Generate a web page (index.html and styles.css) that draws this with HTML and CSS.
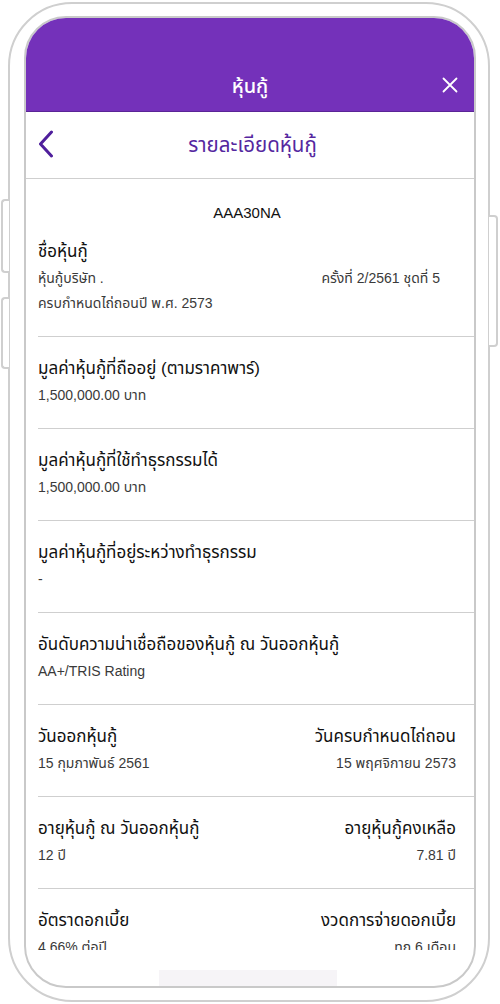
FILE: index.html
```html
<!DOCTYPE html>
<html>
<head>
	<meta charset="utf-8">
	<link rel="stylesheet" href="styles.css">
</head>
<body>
<div class="phone">
	<div class="side-btn btn-left-1"></div>
	<div class="side-btn btn-left-2"></div>
	<div class="side-btn btn-right"></div>

	<div class="screen">
		<div class="topbar">
			<div class="topbar-title">หุ้นกู้</div>
			<svg class="close" width="16" height="16" viewBox="0 0 16 16">
				<path d="M1.5 1.5 L14.5 14.5 M14.5 1.5 L1.5 14.5" stroke="#fff" stroke-width="1.8" fill="none" stroke-linecap="round"/>
			</svg>
		</div>
		<div class="subbar">
			<svg class="back" width="16" height="28" viewBox="0 0 16 28">
				<path d="M13.5 2 L2.5 14 L13.5 26" stroke="#4f1f9c" stroke-width="3" fill="none" stroke-linecap="round" stroke-linejoin="round"/>
			</svg>
			<div class="subbar-title">รายละเอียดหุ้นกู้</div>
		</div>

		<div class="content">
			<div class="block first">
				<div class="code">AAA30NA</div>
				<div class="label">ชื่อหุ้นกู้</div>
				<div class="pair">
					<div class="val">หุ้นกู้บริษัท .</div>
					<div class="val right-in">ครั้งที่ 2/2561 ชุดที่ 5</div>
				</div>
				<div class="val">ครบกำหนดไถ่ถอนปี พ.ศ. 2573</div>
			</div>

			<div class="block">
				<div class="label">มูลค่าหุ้นกู้ที่ถืออยู่ (ตามราคาพาร์)</div>
				<div class="val">1,500,000.00 บาท</div>
			</div>

			<div class="block">
				<div class="label">มูลค่าหุ้นกู้ที่ใช้ทำธุรกรรมได้</div>
				<div class="val">1,500,000.00 บาท</div>
			</div>

			<div class="block">
				<div class="label">มูลค่าหุ้นกู้ที่อยู่ระหว่างทำธุรกรรม</div>
				<div class="val">-</div>
			</div>

			<div class="block">
				<div class="label">อันดับความน่าเชื่อถือของหุ้นกู้ ณ วันออกหุ้นกู้</div>
				<div class="val">AA+/TRIS Rating</div>
			</div>

			<div class="block two">
				<div class="col">
					<div class="label">วันออกหุ้นกู้</div>
					<div class="val">15 กุมภาพันธ์ 2561</div>
				</div>
				<div class="col end">
					<div class="label">วันครบกำหนดไถ่ถอน</div>
					<div class="val">15 พฤศจิกายน 2573</div>
				</div>
			</div>

			<div class="block two">
				<div class="col">
					<div class="label">อายุหุ้นกู้ ณ วันออกหุ้นกู้</div>
					<div class="val">12 ปี</div>
				</div>
				<div class="col end">
					<div class="label">อายุหุ้นกู้คงเหลือ</div>
					<div class="val">7.81 ปี</div>
				</div>
			</div>

			<div class="block two">
				<div class="col">
					<div class="label">อัตราดอกเบี้ย</div>
					<div class="val">4.66% ต่อปี</div>
				</div>
				<div class="col end">
					<div class="label">งวดการจ่ายดอกเบี้ย</div>
					<div class="val">ทุก 6 เดือน</div>
				</div>
			</div>
		</div>

		<div class="footer">
			<div class="home-bar"></div>
		</div>
	</div>
</div>
</body>
</html>
```

FILE: styles.css
```css
html, body {
	margin: 0;
	padding: 0;
	background: #fff;
}
body {
	width: 500px;
	height: 1004px;
	overflow: hidden;
	font-family: "Liberation Sans", "Noto Sans Thai", "Noto Sans Thai UI", "Noto Sans", sans-serif;
}

.phone {
	position: relative;
	box-sizing: border-box;
	margin: 2px 0 0 8px;
	width: 482px;
	height: 1000px;
	border: 2px solid #cfcfcf;
	border-radius: 64px;
	padding: 12px 0 0 14px;
	background: #fff;
}

.side-btn {
	position: absolute;
	box-sizing: border-box;
	border: 2px solid #cfcfcf;
	background: #fff;
}
.btn-left-1 {
	left: -9px;
	top: 195px;
	width: 8px;
	height: 74px;
	border-right: none;
	border-radius: 4px 0 0 4px;
}
.btn-left-2 {
	left: -9px;
	top: 293px;
	width: 8px;
	height: 72px;
	border-right: none;
	border-radius: 4px 0 0 4px;
}
.btn-right {
	right: -10px;
	top: 211px;
	width: 9px;
	height: 132px;
	border-left: none;
	border-radius: 0 4px 4px 0;
}

.screen {
	box-sizing: border-box;
	width: 452px;
	height: 972px;
	border: 2px solid #c9c9c9;
	border-radius: 42px;
	overflow: hidden;
	display: flex;
	flex-direction: column;
	background: #fff;
}

.topbar {
	position: relative;
	flex: none;
	height: 94px;
	background: #7431ba;
	border-bottom: 1px solid #5a2496;
	box-sizing: border-box;
	display: flex;
	align-items: flex-end;
	justify-content: center;
	padding-bottom: 10px;
}
.topbar-title {
	color: #fff;
	font-size: 20px;
	line-height: 30px;
	font-weight: 500;
}
.close {
	position: absolute;
	right: 16px;
	bottom: 18px;
}

.subbar {
	position: relative;
	flex: none;
	height: 67px;
	box-sizing: border-box;
	border-bottom: 1px solid #cfcfcf;
	display: flex;
	align-items: center;
	justify-content: center;
}
.back {
	position: absolute;
	left: 12px;
	top: 18px;
}
.subbar-title {
	color: #55279f;
	font-size: 20.5px;
	margin-left: 5px;
}

.content {
	flex: 1;
	overflow: hidden;
}

.block {
	margin-left: 12px;
	padding: 19px 18px 21px 0;
	border-bottom: 1px solid #cfcfcf;
}
.block.first {
	padding-top: 23px;
	padding-bottom: 21px;
}
.code {
	text-align: center;
	font-size: 15px;
	line-height: 22px;
	color: #111;
	margin-bottom: 15px;
}
.label {
	font-size: 17px;
	line-height: 26px;
	color: #111;
}
.val {
	font-size: 14px;
	line-height: 24px;
	color: #3a3a3a;
	margin-top: 1px;
}
.pair {
	display: flex;
	justify-content: space-between;
}
.right-in {
	margin-right: 16px;
}
.two {
	display: flex;
	justify-content: space-between;
}
.col.end {
	text-align: right;
}

.footer {
	flex: none;
	height: 36px;
	display: flex;
	justify-content: center;
	align-items: flex-end;
}
.home-bar {
	width: 178px;
	height: 16px;
	margin-left: -4px;
	background: #f6f4f7;
}
```
